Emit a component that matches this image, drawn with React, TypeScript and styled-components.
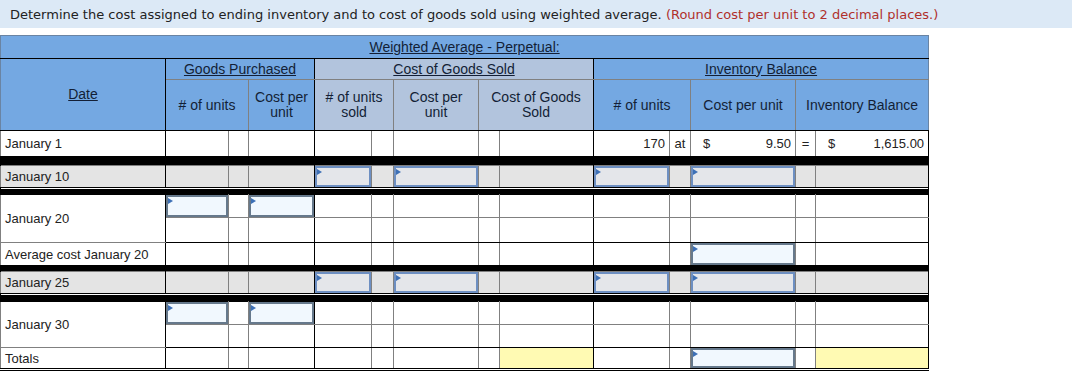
import React from 'react';
import styled, { createGlobalStyle } from 'styled-components';

const BLUE = '#74a8e2';
const STEEL = '#b2c4dd';
const NAVY = '#131f36';
const GRID = '#808080';
const HEAD_EDGE = '#6a84a3';
const SHADE = '#e4e4e4';
const YELLOW = '#fffab3';

const COLS = [165, 63, 20, 66, 57, 22, 85, 21, 94, 76, 21, 105, 20, 113];
const DARK_L = new Set([1, 4, 9]);
const DARK_R = new Set([0, 3, 8, 13]);

const Global = createGlobalStyle`
  html, body { margin: 0; padding: 0; background: #fff; }
  body { font-family: "Liberation Sans", Arial, sans-serif; }
`;

const Page = styled.div`
  display: flex;
  flex-direction: column;
  gap: 7px;
`;

const Banner = styled.div`
  background: #dce9f6;
  height: 28px;
  padding: 0 10px;
  display: flex;
  align-items: center;
  font-family: "DejaVu Sans", Verdana, sans-serif;
  font-size: 13px;
  color: #222;
  white-space: pre;
`;

const Hint = styled.span`
  color: #b0302c;
`;

const Sheet = styled.table`
  border-collapse: collapse;
  table-layout: fixed;
  width: 928px;
  font-family: "Liberation Sans", Arial, sans-serif;
  font-size: 13px;
  color: #222;
`;

type Line = 'dark' | 'grey' | 'none' | 'double';
const lineCss = (l: Line | undefined, grey: string) => {
  switch (l) {
    case 'dark':
      return '1px solid #000';
    case 'double':
      return '3px double #000';
    case 'none':
      return 'none';
    default:
      return `1px solid ${grey}`;
  }
};

const Head = styled.th<{
  $tone: 'blue' | 'steel';
  $dl?: boolean;
  $dr?: boolean;
  $el?: boolean;
  $er?: boolean;
  $u?: boolean;
  $top?: Line;
  $bottom?: Line;
  $h?: number;
}>`
  box-sizing: border-box;
  background: ${(p) => (p.$tone === 'blue' ? BLUE : STEEL)};
  color: ${NAVY};
  font-weight: normal;
  font-size: 14px;
  line-height: 15px;
  text-decoration: ${(p) => (p.$u ? 'underline' : 'none')};
  padding: 0 4px;
  height: ${(p) => (p.$h ? `${p.$h}px` : 'auto')};
  vertical-align: middle;
  text-align: center;
  border-left: 1px solid ${(p) => (p.$el ? HEAD_EDGE : p.$dl ? '#000' : GRID)};
  border-right: 1px solid ${(p) => (p.$er ? HEAD_EDGE : p.$dr ? '#000' : GRID)};
  border-top: ${(p) => lineCss(p.$top, HEAD_EDGE)};
  border-bottom: ${(p) => lineCss(p.$bottom, GRID)};
`;

const Row = styled.tr<{ $shade?: boolean }>`
  background: ${(p) => (p.$shade ? SHADE : '#fff')};
`;

const Cell = styled.td<{
  $dl?: boolean;
  $dr?: boolean;
  $top?: Line;
  $bottom?: Line;
  $fill?: string;
  $h: number;
  $align?: 'left' | 'right' | 'center';
  $flush?: boolean;
}>`
  box-sizing: border-box;
  height: ${(p) => p.$h}px;
  padding: ${(p) => (p.$flush ? '0' : '0 4px')};
  border-left: 1px solid ${(p) => (p.$dl ? '#000' : GRID)};
  border-right: 1px solid ${(p) => (p.$dr ? '#000' : GRID)};
  border-top: ${(p) => lineCss(p.$top, GRID)};
  border-bottom: ${(p) => lineCss(p.$bottom, GRID)};
  background: ${(p) => p.$fill ?? 'transparent'};
  text-align: ${(p) => p.$align ?? 'left'};
  vertical-align: middle;
  white-space: nowrap;
  overflow: hidden;
`;

const InputBox = styled.div<{ $shade?: boolean; $h: number }>`
  position: relative;
  box-sizing: border-box;
  height: ${(p) => p.$h}px;
  border: 2px solid ${(p) => (p.$shade ? '#6d8fc2' : '#66798c')};
  background: ${(p) => (p.$shade ? '#e4e6ea' : '#f1f8fe')};
  &::before {
    content: '';
    position: absolute;
    left: 0;
    top: 1px;
    border-style: solid;
    border-width: 3px 0 3px 5px;
    border-color: transparent transparent transparent #3d70b6;
  }
`;

const Money = styled.div`
  display: flex;
  justify-content: space-between;
  padding-left: 8px;
`;

const SepRow = styled.tr``;

const SepCell = styled.td<{ $h: number; $gap?: boolean }>`
  box-sizing: border-box;
  height: ${(p) => p.$h}px;
  padding: 0;
  background: #000;
  border-left: 1px solid #000;
  border-right: 1px solid #000;
  border-top: none;
  border-bottom: none;
  box-shadow: ${(p) => (p.$gap ? 'inset 0 1px 0 #fff' : 'none')};
`;

type Spec =
  | null
  | 'in'
  | 'y'
  | { t: React.ReactNode; a?: 'left' | 'right' | 'center' }
  | { money: string };

interface RowDef {
  h: number;
  shade?: boolean;
  top?: Line;
  bottom?: Line;
  label?: string;
  labelSpan?: number;
  skipLabel?: boolean;
  cells: Record<number, Spec>;
}

const DataRow: React.FC<{ def: RowDef }> = ({ def }) => {
  const tds: React.ReactNode[] = [];
  if (!def.skipLabel) {
    tds.push(
      <Cell key="d" $h={def.h} $dr $top={def.top} $bottom={def.bottom} rowSpan={def.labelSpan}>
        {def.label}
      </Cell>
    );
  }
  for (let c = 1; c < COLS.length; c++) {
    const s = def.cells[c] ?? null;
    const common = {
      $h: def.h,
      $dl: DARK_L.has(c),
      $dr: DARK_R.has(c),
      $top: def.top,
      $bottom: def.bottom,
    };
    if (s === 'in') {
      tds.push(
        <Cell key={c} {...common} $flush>
          <InputBox $shade={def.shade} $h={def.h - 1} />
        </Cell>
      );
    } else if (s === 'y') {
      tds.push(<Cell key={c} {...common} $fill={YELLOW} />);
    } else if (s && 'money' in s) {
      tds.push(
        <Cell key={c} {...common}>
          <Money>
            <span>$</span>
            <span>{s.money}</span>
          </Money>
        </Cell>
      );
    } else if (s && 't' in s) {
      tds.push(
        <Cell key={c} {...common} $align={s.a}>
          {s.t}
        </Cell>
      );
    } else {
      tds.push(<Cell key={c} {...common} />);
    }
  }
  return <Row $shade={def.shade}>{tds}</Row>;
};

const Sep: React.FC<{ h: number; gap?: boolean }> = ({ h, gap }) => (
  <SepRow>
    <SepCell colSpan={14} $h={h} $gap={gap} />
  </SepRow>
);

const shadedInputs = { 4: 'in', 6: 'in', 9: 'in', 11: 'in' } as Record<number, Spec>;
const purchaseInputs = { 1: 'in', 3: 'in' } as Record<number, Spec>;

export default function App() {
  return (
    <Page>
      <Global />
      <Banner>
        Determine the cost assigned to ending inventory and to cost of goods sold using weighted average.{' '}
        <Hint>(Round cost per unit to 2 decimal places.)</Hint>
      </Banner>
      <Sheet>
        <colgroup>
          {COLS.map((w, i) => (
            <col key={i} style={{ width: w }} />
          ))}
        </colgroup>
        <thead>
          <tr>
            <Head colSpan={14} $tone="blue" $u $el $er $top="grey" $bottom="dark" $h={23}>
              Weighted Average - Perpetual:
            </Head>
          </tr>
          <tr>
            <Head rowSpan={2} $tone="blue" $u $el $dr $top="dark" $bottom="dark">
              Date
            </Head>
            <Head colSpan={3} $tone="blue" $u $dl $dr $top="dark" $h={21}>
              Goods Purchased
            </Head>
            <Head colSpan={5} $tone="steel" $u $dl $dr $top="dark">
              Cost of Goods Sold
            </Head>
            <Head colSpan={5} $tone="blue" $u $dl $er $top="dark">
              Inventory Balance
            </Head>
          </tr>
          <tr>
            <Head colSpan={2} $tone="blue" $dl $bottom="dark" $h={51}>
              # of units
            </Head>
            <Head $tone="blue" $dr $bottom="dark">
              Cost per unit
            </Head>
            <Head colSpan={2} $tone="steel" $dl $bottom="dark">
              # of units sold
            </Head>
            <Head $tone="steel" $bottom="dark">
              Cost per unit
            </Head>
            <Head colSpan={2} $tone="steel" $dr $bottom="dark">
              Cost of Goods Sold
            </Head>
            <Head colSpan={2} $tone="blue" $dl $bottom="dark">
              # of units
            </Head>
            <Head $tone="blue" $bottom="dark">
              Cost per unit
            </Head>
            <Head colSpan={2} $tone="blue" $er $bottom="dark">
              Inventory Balance
            </Head>
          </tr>
        </thead>
        <tbody>
          <DataRow
            def={{
              h: 26,
              top: 'dark',
              bottom: 'dark',
              label: 'January 1',
              cells: {
                9: { t: '170', a: 'right' },
                10: { t: 'at', a: 'center' },
                11: { money: '9.50' },
                12: { t: '=', a: 'center' },
                13: { money: '1,615.00' },
              },
            }}
          />
          <Sep h={9} />
          <DataRow def={{ h: 22, shade: true, top: 'grey', bottom: 'dark', label: 'January 10', cells: shadedInputs }} />
          <Sep h={7} gap />
          <DataRow
            def={{ h: 23, top: 'dark', bottom: 'grey', label: 'January 20', labelSpan: 2, cells: purchaseInputs }}
          />
          <DataRow def={{ h: 25, top: 'grey', bottom: 'dark', skipLabel: true, cells: {} }} />
          <DataRow def={{ h: 23, top: 'dark', bottom: 'dark', label: 'Average cost January 20', cells: { 11: 'in' } }} />
          <Sep h={6} />
          <DataRow def={{ h: 22, shade: true, top: 'grey', bottom: 'dark', label: 'January 25', cells: shadedInputs }} />
          <Sep h={8} gap />
          <DataRow
            def={{ h: 23, top: 'dark', bottom: 'grey', label: 'January 30', labelSpan: 2, cells: purchaseInputs }}
          />
          <DataRow def={{ h: 23, top: 'grey', bottom: 'dark', skipLabel: true, cells: {} }} />
          <DataRow
            def={{
              h: 21,
              top: 'dark',
              bottom: 'double',
              label: 'Totals',
              cells: { 8: 'y', 11: 'in', 13: 'y' },
            }}
          />
        </tbody>
      </Sheet>
    </Page>
  );
}
